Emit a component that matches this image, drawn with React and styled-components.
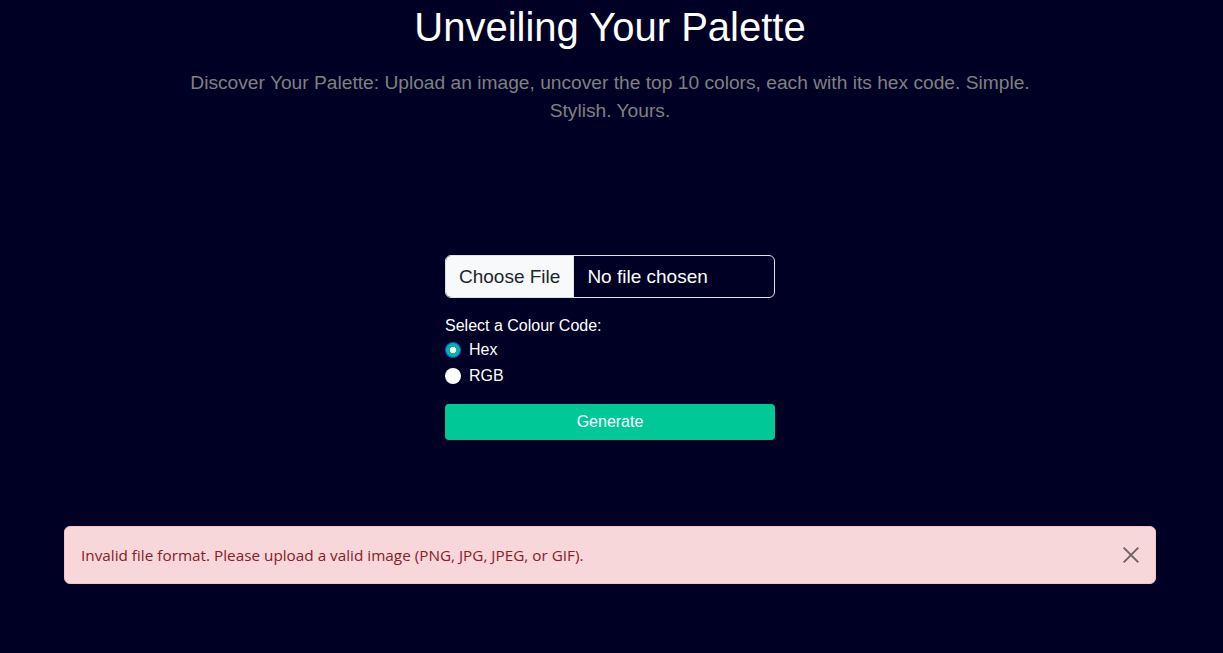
import React, { useState } from 'react'
import styled, { createGlobalStyle } from 'styled-components'

const GlobalStyle = createGlobalStyle`
	html, body {
		margin: 0;
		padding: 0;
		background-color: #000025;
		font-family: "Liberation Sans", Arial, sans-serif;
	}
`

const App = () => {
	const [code, setCode] = useState('hex')
	const [showAlert, setShowAlert] = useState(true)

	return (
		<Page>
			<GlobalStyle />
			<Title>Unveiling Your Palette</Title>
			<Lead>
				Discover Your Palette: Upload an image, uncover the top 10 colors, each with its hex code. Simple. Stylish. Yours.
			</Lead>

			<Form onSubmit={(e) => e.preventDefault()}>
				<FileInput type='file' accept='image/*' />
				<Fieldset>
					<Legend>Select a Colour Code:</Legend>
					<RadioRow>
						<Radio type='radio' name='code' checked={code === 'hex'} onChange={() => setCode('hex')} />
						Hex
					</RadioRow>
					<RadioRow>
						<Radio type='radio' name='code' checked={code === 'rgb'} onChange={() => setCode('rgb')} />
						RGB
					</RadioRow>
				</Fieldset>
				<Button type='submit'>Generate</Button>
			</Form>

			{showAlert && (
				<Alert role='alert'>
					Invalid file format. Please upload a valid image (PNG, JPG, JPEG, or GIF).
					<Close type='button' aria-label='Close' onClick={() => setShowAlert(false)}>
						<svg width='18' height='18' viewBox='0 0 16 16'>
							<path d='M1.5 1.5 L14.5 14.5 M14.5 1.5 L1.5 14.5' stroke='#6e6163' strokeWidth='1.7' />
						</svg>
					</Close>
				</Alert>
			)}
		</Page>
	)
}

const Page = styled.div`
	min-height: 100vh;
	padding: 0 67px 40px 64px;
	display: flex;
	flex-direction: column;
	align-items: center;
	box-sizing: border-box;
`

const Title = styled.h1`
	margin: 3px 0 0 0;
	font-size: 40px;
	font-weight: 400;
	line-height: 48px;
	color: #ffffff;
`

const Lead = styled.p`
	margin: 18px 0 0 0;
	max-width: 870px;
	font-size: 19.2px;
	line-height: 28px;
	text-align: center;
	color: #808080;
`

const Form = styled.form`
	margin-top: 130px;
	width: 330px;
	display: flex;
	flex-direction: column;
`

const FileInput = styled.input`
	box-sizing: border-box;
	width: 100%;
	height: 43px;
	padding: 0 12px 0 0;
	border: 1px solid #dee2e6;
	border-radius: 6px;
	background: transparent;
	color: #ffffff;
	font-family: "Liberation Sans", Arial, sans-serif;
	font-size: 19px;
	overflow: hidden;

	&::file-selector-button {
		height: 41px;
		margin: 0 13px 0 0;
		padding: 0 13px;
		border: none;
		border-right: 1px solid #dee2e6;
		border-radius: 0;
		background: #f8f9fa;
		color: #212529;
		font-family: "Liberation Sans", Arial, sans-serif;
		font-size: 19px;
	}
`

const Fieldset = styled.div`
	margin-top: 18px;
	display: flex;
	flex-direction: column;
	color: #ffffff;
	font-size: 16px;
`

const Legend = styled.div`
	line-height: 20px;
	margin-bottom: 1px;
`

const RadioRow = styled.label`
	display: flex;
	align-items: center;
	gap: 8px;
	height: 26px;
	cursor: pointer;
`

const Radio = styled.input`
	appearance: none;
	margin: 0;
	width: 16px;
	height: 16px;
	border-radius: 50%;
	background: #ffffff;
	cursor: pointer;

	&:checked {
		background: radial-gradient(circle, #ffffff 0 3px, #00b8a0 3.5px 6.5px, #1a56d6 7px);
	}
`

const Button = styled.button`
	margin-top: 15px;
	height: 36px;
	border: none;
	border-radius: 4px;
	background: #00c896;
	color: #ffffff;
	font-family: "Liberation Sans", Arial, sans-serif;
	font-size: 16px;
	cursor: pointer;
`

const Alert = styled.div`
	margin-top: 86px;
	align-self: stretch;
	box-sizing: border-box;
	display: flex;
	align-items: center;
	justify-content: space-between;
	padding: 16px;
	border: 1px solid #f5c2c7;
	border-radius: 6px;
	background: #f8d7da;
	color: #842029;
	font-family: "Open Sans", "Noto Sans", sans-serif;
	font-size: 15.3px;
	line-height: 24px;
`

const Close = styled.button`
	display: flex;
	align-items: center;
	justify-content: center;
	width: 24px;
	height: 24px;
	margin-right: -4px;
	padding: 0;
	border: none;
	background: transparent;
	cursor: pointer;
`

export default App
